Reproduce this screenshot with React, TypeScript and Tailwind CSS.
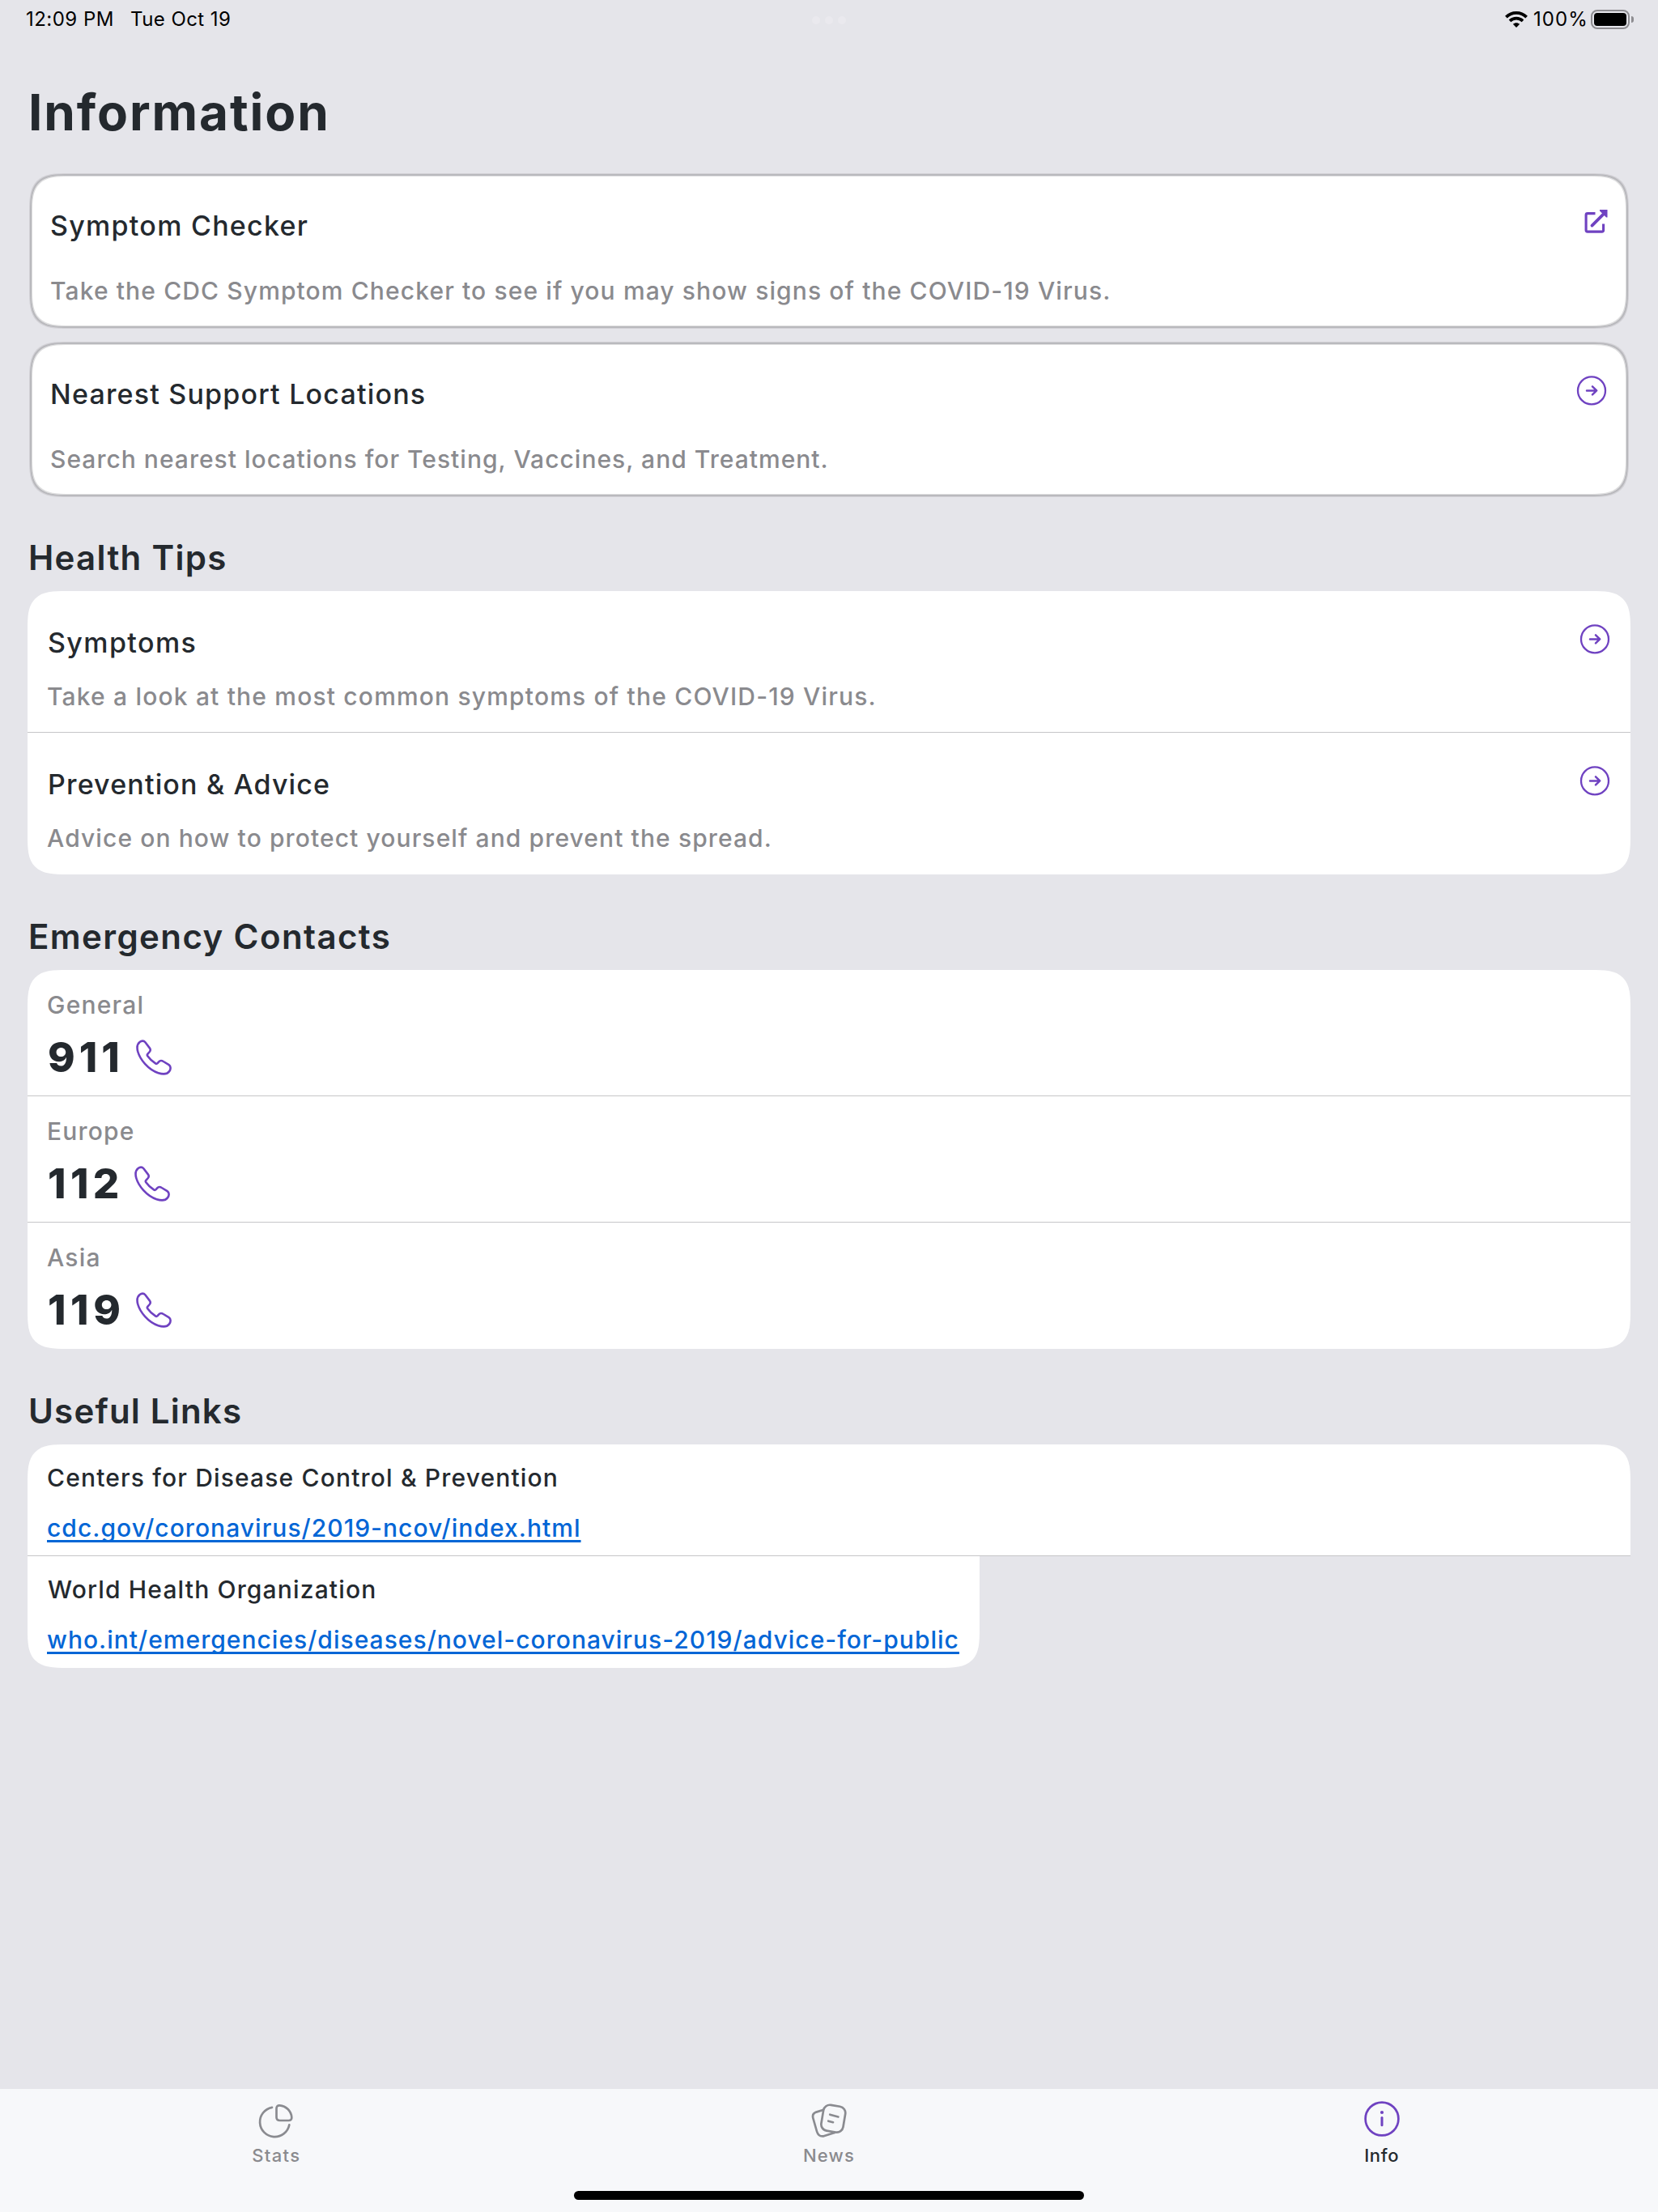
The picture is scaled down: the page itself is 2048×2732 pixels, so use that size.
import React from "react";

const corner =
  "rounded-[33px] supports-[corner-shape:squircle]:rounded-[49px] supports-[corner-shape:squircle]:[corner-shape:superellipse(1.7)]";
const cornerTop =
  "rounded-t-[33px] supports-[corner-shape:squircle]:rounded-t-[49px] supports-[corner-shape:squircle]:[corner-shape:superellipse(1.7)]";
const cornerBottom =
  "rounded-b-[33px] supports-[corner-shape:squircle]:rounded-b-[49px] supports-[corner-shape:squircle]:[corner-shape:superellipse(1.7)]";

function ArrowCircle() {
  return (
    <svg className="block size-10" viewBox="0 0 40 40" fill="none" stroke="#6f42c1" strokeWidth="2.3" strokeLinecap="round" strokeLinejoin="round">
      <circle cx="20" cy="20.4" r="17" />
      <path d="M14 20.4H26M21 15.4L26.2 20.4L21 25.4" strokeWidth="2.5" />
    </svg>
  );
}

function ExternalLink() {
  return (
    <svg className="block size-10" viewBox="0 0 40 40" fill="none" stroke="#6f42c1">
      <path d="M24.5 9.6H15Q13.1 9.6 13.1 11.5V30.2Q13.1 32.1 15 32.1H32.7Q34.6 32.1 34.6 30.2V22.6" strokeWidth="3.1" />
      <path d="M20.5 24.6L35 10.2" strokeWidth="3.8" strokeLinecap="round" />
      <path d="M30 5H39.5V14.5H38.1L30 6.4Z" fill="#6f42c1" stroke="none" />
    </svg>
  );
}

function Phone() {
  return (
    <svg className="block h-11 w-[45px]" viewBox="0 0 45 44" fill="none" stroke="#6f42c1" strokeWidth="2.6" strokeLinejoin="round">
      <path d="M11.4 3.2C9.6 1 6.8 1.2 4.6 3C1.4 5.6 .9 10 2.3 15C5 24.5 15 37 27.5 41.2C33 43 38.5 42.6 41 39.4C43.2 36.6 43.3 33 40.6 31.2L33.8 27C32 25.8 29.6 25.8 28.2 27.4L26.6 29.2C25.8 30 24.9 30 24 29.4C20 26.8 17 24 14.3 20.2C13.6 19.2 13.6 18.6 14.3 17.8L16.8 15C17.9 13.6 18 12 17 10.6Z" />
    </svg>
  );
}

function StatusBar() {
  return (
    <div className="relative flex h-[46px] shrink-0 items-center justify-between pl-8 pr-[30px] text-2xl leading-[46px] font-normal text-black">
      <div className="flex pt-0.5">
        <span className="w-[129px] tracking-[0.48px]">12:09 PM</span>
        <span className="tracking-[0.44px]">Tue Oct 19</span>
      </div>
      <div className="absolute top-5 left-[1003px] flex gap-1.5">
        <i className="size-2.5 rounded-full bg-[#eae9ee]" />
        <i className="size-2.5 rounded-full bg-[#eae9ee]" />
        <i className="size-2.5 rounded-full bg-[#eae9ee]" />
      </div>
      <div className="flex items-center">
        <svg className="mt-0.5 mr-[7px] h-5 w-7" viewBox="0 0 28 20" fill="none" stroke="#000">
          <path d="M1.4 7.2C8.4 .2 19.6 .2 26.6 7.2" strokeWidth="3.8" />
          <path d="M6 11.9C10.5 7.6 17.5 7.6 22 11.9" strokeWidth="3.7" />
          <path d="M14 20L9.8 15.8C12.2 13.6 15.8 13.6 18.2 15.8Z" fill="#000" stroke="none" />
        </svg>
        <span className="mr-[3px] pt-0.5 tracking-[1.1px]">100%</span>
        <div className="mt-0.5 h-6 w-12 rounded-lg border-2 border-[#8d8c90] p-0.5">
          <div className="h-full rounded-[4px] bg-black" />
        </div>
        <div className="mt-0.5 ml-0.5 h-2 w-[3px] rounded-r-full bg-[#8d8c90]" />
      </div>
    </div>
  );
}

function ActionCard({ title, text, titleClass, textClass, icon }: { title: string; text: string; titleClass: string; textClass: string; icon: React.ReactNode }) {
  return (
    <div className={`mx-[3px] flex h-[190px] justify-between border-2 border-[#b9b9bd] bg-white pt-10 pr-[23px] pl-[23px] shadow-[0_0_0_1px_#d2d1d6,inset_0_0_0_1px_#dededf] ${corner}`}>
      <div>
        <div className={`text-[34px] leading-[44px] font-medium ${titleClass}`}>{title}</div>
        <div className={`mt-[38px] text-3xl leading-10 font-medium text-[#8a8a8e] ${textClass}`}>{text}</div>
      </div>
      <div className="-mt-[3px]">{icon}</div>
    </div>
  );
}

function TipRow({ title, text, titleClass, textClass }: { title: string; text: string; titleClass: string; textClass: string }) {
  return (
    <div className="flex h-[175px] justify-between pt-[41px] pr-6 pl-6">
      <div>
        <div className={`pl-px text-[34px] leading-[45px] font-medium ${titleClass}`}>{title}</div>
        <div className={`mt-6 text-3xl leading-10 font-medium text-[#8a8a8e] ${textClass}`}>{text}</div>
      </div>
      <div className="-mt-0.5">
        <ArrowCircle />
      </div>
    </div>
  );
}

function Contact({ region, number, numberClass }: { region: string; number: string; numberClass: string }) {
  return (
    <div className="h-[156px] pt-[23px] pl-6">
      <div className="text-3xl leading-10 font-medium tracking-[1.2px] text-[#8a8a8e]">{region}</div>
      <div className="mt-[15px] flex h-[60px] items-center">
        <span className={`pl-px text-[51px] leading-[60px] font-extrabold ${numberClass}`}>{number}</span>
        <Phone />
      </div>
    </div>
  );
}

function Heading({ className, children }: { className: string; children: string }) {
  return <h2 className={`mb-[15px] h-[52px] pl-px text-[42px] leading-[52px] font-semibold ${className}`}>{children}</h2>;
}

const link = "mt-[22px] h-10 w-fit text-3xl leading-10 font-medium text-[#0366d6] underline decoration-[2.5px] underline-offset-[4px] [text-decoration-skip-ink:none]";

function Tab({ label, className, children }: { label: string; className: string; children: React.ReactNode }) {
  return (
    <div className="flex flex-1 flex-col items-center pt-[15px]">
      <svg className="block size-12" viewBox="0 0 48 48" fill="none" strokeWidth="2.7" strokeLinecap="round" strokeLinejoin="round">
        {children}
      </svg>
      <span className={`mt-[5px] text-[22px] leading-7 font-medium ${className}`}>{label}</span>
    </div>
  );
}

export default function App() {
  return (
    <div className="flex h-[2732px] w-[2048px] flex-col overflow-hidden bg-[#e5e5ea] font-['Inter',sans-serif] text-[#24292e]">
      <StatusBar />
      <main className="flex-1 px-[34px]">
        <h1 className="mt-[54px] mb-[38px] pl-px text-[62px] leading-[77px] font-bold tracking-[1.9px]">Information</h1>
        <ActionCard
          title="Symptom Checker"
          text="Take the CDC Symptom Checker to see if you may show signs of the COVID-19 Virus."
          titleClass="tracking-[1.27px]"
          textClass="tracking-[1.12px]"
          icon={<ExternalLink />}
        />
        <div className="h-[18px]" />
        <ActionCard
          title="Nearest Support Locations"
          text="Search nearest locations for Testing, Vaccines, and Treatment."
          titleClass="tracking-[1.19px]"
          textClass="tracking-[1.02px]"
          icon={<ArrowCircle />}
        />

        <div className="h-[50px]" />
        <Heading className="tracking-[1.28px]">Health Tips</Heading>
        <section className={`overflow-hidden bg-white ${corner}`}>
          <TipRow title="Symptoms" text="Take a look at the most common symptoms of the COVID-19 Virus." titleClass="tracking-[1.4px]" textClass="tracking-[1.18px]" />
          <div className="-mt-px h-px bg-[#c6c6c8]" />
          <TipRow title="Prevention & Advice" text="Advice on how to protect yourself and prevent the spread." titleClass="tracking-[1.16px]" textClass="tracking-[1.1px]" />
        </section>

        <div className="h-[51px]" />
        <Heading className="tracking-[1.4px]">Emergency Contacts</Heading>
        <section className={`overflow-hidden bg-white ${corner}`}>
          <Contact region="General" number="911" numberClass="w-[110px] tracking-[5px]" />
          <div className="-mt-px h-px bg-[#c6c6c8]" />
          <Contact region="Europe" number="112" numberClass="w-[108px] tracking-[5.4px]" />
          <div className="-mt-px h-px bg-[#c6c6c8]" />
          <Contact region="Asia" number="119" numberClass="w-[110px] tracking-[5.6px]" />
        </section>

        <div className="h-[51px]" />
        <Heading className="tracking-[1.2px]">Useful Links</Heading>
        <section>
          <div className={`h-[138px] border-b border-[#c6c6c8] bg-white pt-[21px] pl-6 ${cornerTop}`}>
            <div className="text-3xl leading-10 font-medium tracking-[1.16px]">Centers for Disease Control &amp; Prevention</div>
            <div className={`${link} tracking-[1.04px]`}>cdc.gov/coronavirus/2019-ncov/index.html</div>
          </div>
          <div className={`h-[138px] w-[1176px] bg-white pt-[21px] pl-6 ${cornerBottom}`}>
            <div className="pl-px text-3xl leading-10 font-medium tracking-[1.16px]">World Health Organization</div>
            <div className={`${link} tracking-[1.02px]`}>who.int/emergencies/diseases/novel-coronavirus-2019/advice-for-public</div>
          </div>
        </section>
      </main>

      <nav className="relative flex h-[152px] shrink-0 bg-[#f7f8fa]">
        <Tab label="Stats" className="tracking-[1.3px] text-[#8a8a8e]">
          <g stroke="#8a8b90">
            <path d="M19 7.8A18.3 18.3 0 1 0 40.3 29.4" />
            <path d="M28.3 5.3C36.6 6 42.6 12.4 43.3 20C43.5 22.8 42 24 39.5 24H29C26 24 24.5 22.6 24.5 20V9C24.5 6.5 26 5.2 28.3 5.3Z" />
          </g>
        </Tab>
        <Tab label="News" className="tracking-[1.2px] text-[#8a8a8e]">
          <g stroke="#8a8b90">
            <path d="M16.6 11L8.2 13.6C4.6 15 3.4 17.6 4.3 21L9 37.5C10.3 42 13 44 17.5 43.3L31 39" />
            <rect x="15.6" y="5.6" width="27.4" height="32.2" rx="8" transform="rotate(9.5 29.3 21.7)" />
            <path d="M25.2 16.7L35.4 19.5M23.2 24.7L29 26.2" />
          </g>
        </Tab>
        <Tab label="Info" className="tracking-[0.67px]">
          <g stroke="#6f42c1">
            <circle cx="24" cy="22" r="20.4" />
            <path d="M24 20.6V29.8" strokeWidth="3" />
            <circle cx="24" cy="14" r="2.1" fill="#6f42c1" stroke="none" />
          </g>
        </Tab>
        <div className="absolute top-[126px] left-[709px] h-[11px] w-[630px] rounded-full bg-black" />
      </nav>
    </div>
  );
}
